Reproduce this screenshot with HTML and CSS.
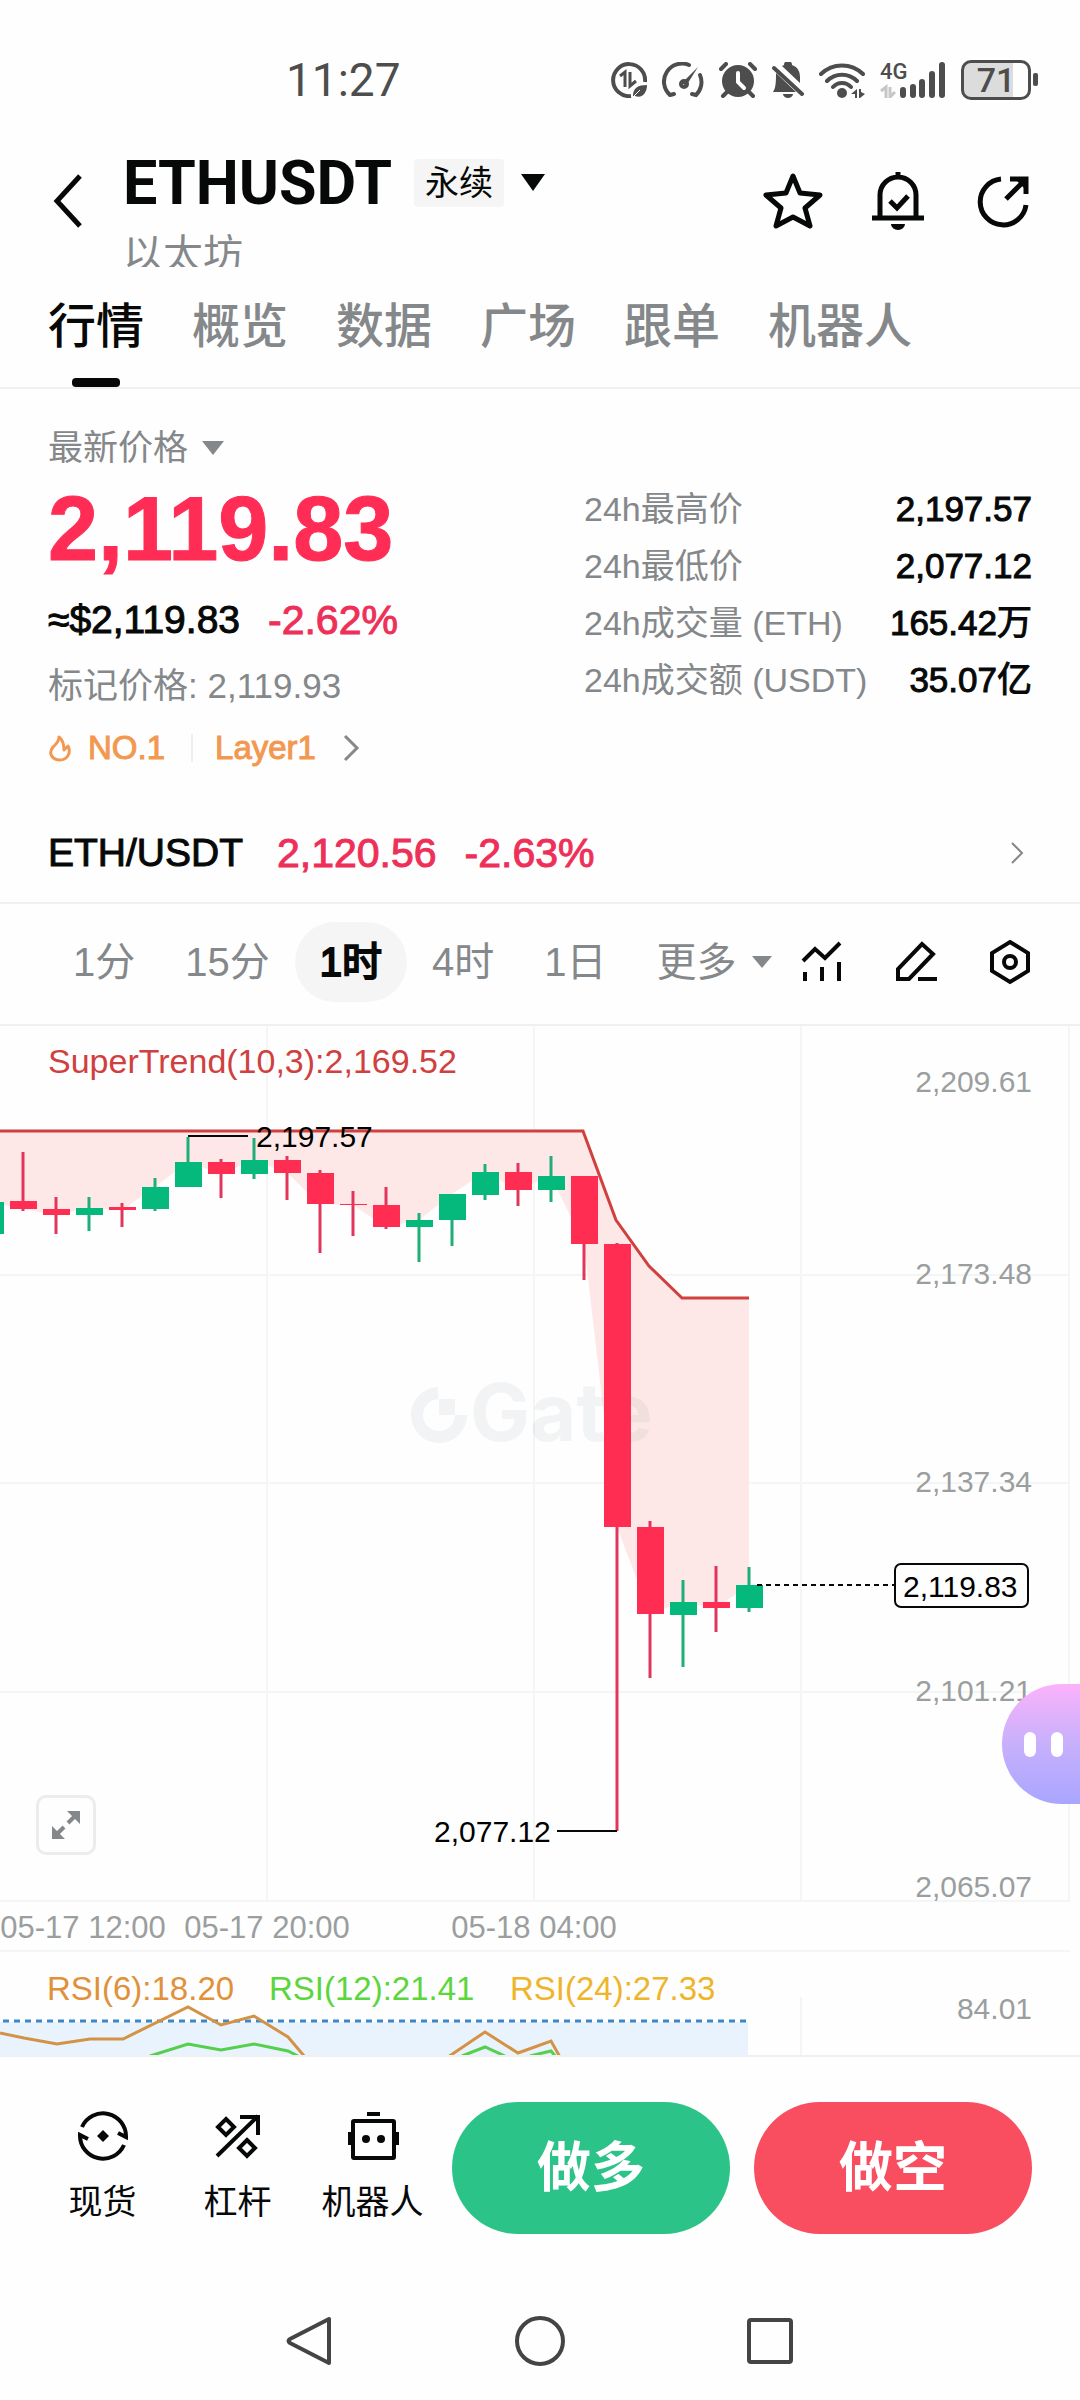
FILE: index.html
```html
<!DOCTYPE html>
<html lang="zh-CN">
<head>
    <meta charset="UTF-8">
    <meta name="viewport" content="width=device-width, initial-scale=1.0">
    <title>ETHUSDT 永续</title>
    <link rel="stylesheet" href="styles.css">
</head>
<body>

    <div class="status-bar">
        <span class="clock">11:27</span>
        <div class="status-icons">
            <!-- data saver -->
            <svg width="36" height="36" viewBox="0 0 36 36" fill="none" stroke="#4d4d4d" stroke-width="4">
                <path d="M20 34A16 16 0 1 1 34 20"/>
                <path d="M9 14l5-4v15M19 10v14l6-5" stroke-width="3"/>
                <path d="M22 34c0-8 5-11 14-11c0 8-5 14-12 11z" fill="#4d4d4d" stroke="none"/>
                <path d="M21 36l8-8" stroke="#fefefe" stroke-width="1"/>
            </svg>
            <!-- speed -->
            <svg width="42" height="36" viewBox="0 0 42 36" fill="none" stroke="#4d4d4d" stroke-width="4" stroke-linecap="round">
                <path d="M8 33l4-1M8 33A18 18 0 0 1 27 3M38 13a18 18 0 0 1-4 20l-4-1"/>
                <path d="M36 5L24 24l-4-3z" fill="#4d4d4d" stroke="none"/>
                <circle cx="22" cy="22" r="3"/>
            </svg>
            <!-- alarm -->
            <svg width="38" height="36" viewBox="0 0 38 36" fill="none" stroke="#4d4d4d" stroke-width="4" stroke-linecap="round">
                <circle cx="19" cy="19" r="16" fill="#4d4d4d" stroke="none"/>
                <path d="M2 7l5-5M36 7l-5-5M8 30l-4 4M30 30l4 4"/>
                <path d="M19 11v9l6 6" stroke="#fefefe"/>
            </svg>
            <!-- muted -->
            <svg width="32" height="36" viewBox="0 0 32 36" fill="#4d4d4d">
                <path d="M12 3a4 4 0 0 1 8 0c6 2 8 7 8 12v6L10 4zM4 11l20 19H1c3-4 3-11 3-19zM11 32h10a5 4 0 0 1-10 0z"/>
                <path d="M2 6l28 26" stroke="#4d4d4d" stroke-width="4" stroke-linecap="round"/>
            </svg>
            <!-- wifi -->
            <svg width="46" height="36" viewBox="0 0 46 36" fill="none" stroke="#4d4d4d" stroke-width="4" stroke-linecap="round">
                <path d="M2 12a30 30 0 0 1 42 0M8 19a21 21 0 0 1 30 0M14 25a12 12 0 0 1 18 0"/>
                <circle cx="23" cy="31" r="5" fill="#4d4d4d" stroke="none"/>
                <path d="M32 32l6-5v9h-2v-4zM40 27h2v3l4 2-5 4h-1z" fill="#4d4d4d" stroke="none"/>
            </svg>
            <!-- signal -->
            <span class="network">
                <span class="network-type">4G</span>
                <svg width="66" height="36" viewBox="0 0 66 36" fill="none" stroke="#4d4d4d" stroke-width="6" stroke-linecap="round">
                    <path d="M23 28v5M33 25v8M42 20v13M52 12v21M62 3v30"/>
                    <path d="M1 29l5-4v11M10 25v10l5-5" stroke="#c6c6c6" stroke-width="3" stroke-linecap="butt"/>
                </svg>
            </span>
            <span class="battery"><span class="battery-level">71</span></span>
        </div>
    </div>

    <header class="header">
        <button class="icon-btn" aria-label="返回">
            <svg width="30" height="54" viewBox="0 0 30 54" fill="none" stroke="#070808" stroke-width="5"><path d="M27 2L4 27l23 25"/></svg>
        </button>
        <div class="pair">
            <button class="pair-title">
                <span class="pair-name">ETHUSDT</span>
                <span class="pair-type">永续</span>
                <svg width="26" height="18" viewBox="0 0 26 18"><path d="M1 0h24L13 17z" fill="#070808"/></svg>
            </button>
            <div class="pair-alias">以太坊</div>
        </div>
        <div class="header-actions">
            <button class="icon-btn" aria-label="收藏">
                <svg width="60" height="60" viewBox="0 0 60 60" fill="none" stroke="#070808" stroke-width="5" stroke-linejoin="round"><path d="M30 5l7 17 20 2-15 13 5 18-17-9-17 9 5-18L3 24l20-2z"/></svg>
            </button>
            <button class="icon-btn" aria-label="提醒">
                <svg width="60" height="60" viewBox="0 0 60 60" fill="none" stroke="#070808" stroke-width="5">
                    <path d="M4 47h52M12 47V24a18 18 0 0 1 36 0v23M30 1v6"/>
                    <path d="M22 30l7 7 11-12"/>
                    <path d="M23 53h14a7 6 0 0 1-14 0z" fill="#070808" stroke="none"/>
                </svg>
            </button>
            <button class="icon-btn" aria-label="分享">
                <svg width="60" height="60" viewBox="0 0 60 60" fill="none" stroke="#070808" stroke-width="5">
                    <path d="M28 8A23 23 0 1 0 53 34"/>
                    <path d="M33 28L51 10M37 8h16v15"/>
                    <path d="M42 8h11v11z" fill="#070808" stroke="none"/>
                </svg>
            </button>
        </div>
    </header>

    <nav class="tabs">
        <a class="tab active" href="#">行情</a>
        <a class="tab" href="#">概览</a>
        <a class="tab" href="#">数据</a>
        <a class="tab" href="#">广场</a>
        <a class="tab" href="#">跟单</a>
        <a class="tab" href="#">机器人</a>
    </nav>

    <section class="ticker">
        <div class="ticker-price">
            <button class="price-type">最新价格
                <svg width="22" height="16" viewBox="0 0 22 16"><path d="M0 1h22L11 15z" fill="#85888a"/></svg>
            </button>
            <div class="last-price">2,119.83</div>
            <div class="fiat-row"><span class="fiat">≈$2,119.83</span><span class="change">-2.62%</span></div>
            <div class="mark-price">标记价格: 2,119.93</div>
            <a class="tags" href="#">
                <svg width="24" height="28" viewBox="0 0 24 28" fill="none" stroke="#f39850" stroke-width="3" stroke-linejoin="round"><path d="M11 3c0 5-3 7-6 10c-6 8 1 13 7 13s12-6 8-14l-4 4c0-6-1-10-5-13z"/></svg>
                <span>NO.1</span>
                <span class="tag-divider"></span>
                <span>Layer1</span>
                <svg class="tag-arrow" width="18" height="28" viewBox="0 0 18 28" fill="none" stroke="#85888a" stroke-width="3"><path d="M3 2l12 12L3 26"/></svg>
            </a>
        </div>
        <dl class="stats">
            <div class="stat"><dt>24h最高价</dt><dd>2,197.57</dd></div>
            <div class="stat"><dt>24h最低价</dt><dd>2,077.12</dd></div>
            <div class="stat"><dt>24h成交量 (ETH)</dt><dd>165.42万</dd></div>
            <div class="stat"><dt>24h成交额 (USDT)</dt><dd>35.07亿</dd></div>
        </dl>
    </section>

    <a class="spot" href="#">
        <span class="spot-name">ETH/USDT</span>
        <span class="spot-price">2,120.56</span>
        <span class="spot-price">-2.63%</span>
        <svg class="spot-arrow" width="16" height="24" viewBox="0 0 16 24" fill="none" stroke="#85888a" stroke-width="2"><path d="M2 2l10 10L2 22"/></svg>
    </a>

    <div class="intervals">
        <button class="interval">1分</button>
        <button class="interval">15分</button>
        <button class="interval active">1时</button>
        <button class="interval">4时</button>
        <button class="interval">1日</button>
        <button class="interval more">更多
            <svg width="20" height="14" viewBox="0 0 20 14"><path d="M0 1h20L10 13z" fill="#85888a"/></svg>
        </button>
        <div class="chart-tools">
            <button class="icon-btn" aria-label="指标">
                <svg width="44" height="46" viewBox="0 0 44 46" fill="none" stroke="#070808" stroke-width="4">
                    <path d="M3 22l12-12 10 9L40 4"/>
                    <path d="M5 33v9M22 28v14M39 23v19"/>
                </svg>
            </button>
            <button class="icon-btn" aria-label="画线">
                <svg width="44" height="46" viewBox="0 0 44 46" fill="none" stroke="#070808" stroke-width="4">
                    <path d="M4 40V30L28 5l11 10-24 25z"/>
                    <path d="M24 40h19"/>
                </svg>
            </button>
            <button class="icon-btn" aria-label="设置">
                <svg width="44" height="46" viewBox="0 0 44 46" fill="none" stroke="#070808" stroke-width="4">
                    <path d="M22 3l18 11v18L22 43 4 32V14z"/>
                    <circle cx="22" cy="23" r="6"/>
                </svg>
            </button>
        </div>
    </div>

    <main class="chart">
        <svg class="chart-svg" viewBox="0 1026 1080 1029">
            <g class="grid">
                <path d="M0 1275h1070M0 1483h1070M0 1692h1070M0 1901h1070M0 1951h1070"/>
                <path d="M267 1026v875M534 1026v875M801 1026v875M1069 1026v875M801 1997v58"/>
            </g>

            <!-- SuperTrend -->
            <path class="trend-fill" d="M0 1131H583L616 1220 649 1266 682 1298H749V1585L716 1608 683 1602 650 1614 617 1527 584 1244 551 1176 518 1190 485 1172 452 1194 419 1220 386 1227 353 1205 320 1204 287 1173 254 1160 221 1174 188 1162 155 1187 122 1210 89 1208 56 1215 23 1209 0 1204z"/>
            <path class="trend-line" d="M0 1131H583L616 1220 649 1266 682 1298H749"/>

            <g class="watermark">
                <path d="M438 1393a22 22 0 1 0 23 22" fill="none" stroke="#3b5a66" stroke-width="12"/>
                <rect x="439" y="1399" width="16" height="16"/>
                <text x="470" y="1441">Gate</text>
            </g>

            <!-- candles: wicks, then bodies -->
            <g class="up">
                <path d="M89 1197v34M155 1178v33M188 1137v50M254 1138v41M419 1213v49M452 1194v52M485 1164v36M551 1156v46M683 1580v87M749 1567v45"/>
                <rect x="-23" y="1202" width="27" height="32"/>
                <rect x="76" y="1208" width="27" height="7"/>
                <rect x="142" y="1187" width="27" height="22"/>
                <rect x="175" y="1162" width="27" height="25"/>
                <rect x="241" y="1160" width="27" height="14"/>
                <rect x="406" y="1220" width="27" height="7"/>
                <rect x="439" y="1194" width="27" height="26"/>
                <rect x="472" y="1172" width="27" height="23"/>
                <rect x="538" y="1176" width="27" height="14"/>
                <rect x="670" y="1602" width="27" height="13"/>
                <rect x="736" y="1585" width="27" height="23"/>
            </g>
            <g class="down">
                <path d="M23 1152v59M56 1197v37M122 1203v24M221 1159v39M287 1156v44M320 1170v83M353 1191v45M386 1187v42M518 1163v43M584 1176v104M617 1243v588M650 1521v157M716 1566v66"/>
                <rect x="10" y="1201" width="27" height="8"/>
                <rect x="43" y="1209" width="27" height="6"/>
                <rect x="109" y="1207" width="27" height="3"/>
                <rect x="208" y="1162" width="27" height="12"/>
                <rect x="274" y="1160" width="27" height="13"/>
                <rect x="307" y="1173" width="27" height="31"/>
                <rect x="340" y="1204" width="27" height="1"/>
                <rect x="373" y="1205" width="27" height="22"/>
                <rect x="505" y="1172" width="27" height="18"/>
                <rect x="571" y="1176" width="27" height="68"/>
                <rect x="604" y="1244" width="27" height="283"/>
                <rect x="637" y="1527" width="27" height="87"/>
                <rect x="703" y="1602" width="27" height="6"/>
            </g>

            <g class="marks">
                <path d="M188 1136h60M557 1831h60"/>
                <path d="M757 1585h137" stroke-dasharray="5 4"/>
                <rect x="895" y="1564" width="133" height="43" rx="6"/>
                <text x="256" y="1147">2,197.57</text>
                <text x="434" y="1842">2,077.12</text>
                <text x="903" y="1597">2,119.83</text>
            </g>

            <text class="trend-label" x="48" y="1073">SuperTrend(10,3):2,169.52</text>

            <g class="axis-y">
                <text x="1032" y="1092">2,209.61</text>
                <text x="1032" y="1284">2,173.48</text>
                <text x="1032" y="1492">2,137.34</text>
                <text x="1032" y="1701">2,101.21</text>
                <text x="1032" y="1897">2,065.07</text>
                <text x="1032" y="2019">84.01</text>
            </g>
            <g class="axis-x">
                <text x="83" y="1938">05-17 12:00</text>
                <text x="267" y="1938">05-17 20:00</text>
                <text x="534" y="1938">05-18 04:00</text>
            </g>

            <!-- RSI -->
            <rect class="rsi-band" x="0" y="2022" width="748" height="33"/>
            <path class="rsi-limit" d="M3 2021h745"/>
            <path class="rsi12" d="M150 2056L188 2044 221 2050 254 2044 288 2051 298 2056M462 2056L485 2047 505 2056M530 2056L551 2051 556 2057"/>
            <path class="rsi6" d="M0 2033L24 2038 57 2044 90 2039H123L188 2007 221 2025 254 2016 288 2037 305 2057M448 2057L485 2032 518 2053 551 2041 560 2057"/>
            <g class="rsi-labels">
                <text x="47" y="2000" fill="#e0913a">RSI(6):18.20</text>
                <text x="269" y="2000" fill="#5bd63c">RSI(12):21.41</text>
                <text x="510" y="2000" fill="#efb52a">RSI(24):27.33</text>
            </g>
        </svg>
        <button class="expand" aria-label="全屏">
            <svg width="30" height="30" viewBox="0 0 30 30" fill="none" stroke="#85888a" stroke-width="4">
                <path d="M17 13l8-8M13 17l-8 8"/>
                <path d="M16 1h13v13zM1 16v13h13z" fill="#85888a" stroke="none"/>
            </svg>
        </button>
        <button class="assistant" aria-label="助手"><span class="eye"></span><span class="eye"></span></button>
    </main>

    <footer class="actions">
        <a class="action" href="#">
            <svg width="52" height="52" viewBox="0 0 52 52" fill="none" stroke="#070808" stroke-width="4">
                <path d="M5 17A23 23 0 0 1 49 27l-8-4M47 35A23 23 0 0 1 3 25l8 4"/>
                <path d="M26 20l6 6-6 6-6-6z" fill="#070808" stroke="none"/>
            </svg>
            <span>现货</span>
        </a>
        <a class="action" href="#">
            <svg width="52" height="52" viewBox="0 0 52 52" fill="none" stroke="#070808" stroke-width="4">
                <path d="M5 46L46 6M28 7h18v18M14 9l8 8-8 8-8-8zM35 30l8 8-8 8-8-8z"/>
            </svg>
            <span>杠杆</span>
        </a>
        <a class="action" href="#">
            <svg width="52" height="52" viewBox="0 0 52 52" fill="none" stroke="#070808" stroke-width="4">
                <rect x="6" y="11" width="41" height="37" rx="1"/>
                <path d="M20 4h13M3 22v13M50 22v13"/>
                <circle cx="19" cy="29" r="4" fill="#070808" stroke="none"/>
                <circle cx="34" cy="29" r="4" fill="#070808" stroke="none"/>
            </svg>
            <span>机器人</span>
        </a>
        <div class="trade">
            <button class="trade-btn long">做多</button>
            <button class="trade-btn short">做空</button>
        </div>
    </footer>

    <nav class="system-nav">
        <button class="icon-btn" aria-label="后退">
            <svg width="52" height="52" viewBox="0 0 52 52" fill="none" stroke="#444" stroke-width="4" stroke-linejoin="round"><path d="M45 4v44L6 28q-3-2 0-4z"/></svg>
        </button>
        <button class="icon-btn" aria-label="主屏幕">
            <svg width="52" height="52" viewBox="0 0 52 52" fill="none" stroke="#444" stroke-width="4"><circle cx="26" cy="26" r="23"/></svg>
        </button>
        <button class="icon-btn" aria-label="最近任务">
            <svg width="52" height="52" viewBox="0 0 52 52" fill="none" stroke="#444" stroke-width="4"><rect x="5" y="5" width="42" height="42" rx="2"/></svg>
        </button>
    </nav>

</body>
</html>
```
FILE: styles.css
```css
* {
    box-sizing: border-box;
}
body {
    margin: 0;
    font-family: "Liberation Sans", "Noto Sans CJK SC", sans-serif;
    font-size: 34px;
    line-height: 48px;
    color: #070808;
    background: #fefefe;
}
button {
    font: inherit;
    color: inherit;
    background: none;
    border: none;
    padding: 0;
    cursor: pointer;
}
a {
    color: inherit;
    text-decoration: none;
}
svg {
    display: block;
    flex: none;
}
.icon-btn {
    display: flex;
}

/* status bar */
.status-bar {
    display: flex;
    align-items: center;
    justify-content: space-between;
    height: 120px;
    padding: 40px 42px 0 286px;
    color: #4d4d4d;
}
.clock {
    font-family: Roboto, sans-serif;
    font-size: 46px;
}
.status-icons {
    display: flex;
    align-items: center;
    gap: 15px;
}
.network {
    position: relative;
}
.network-type {
    position: absolute;
    top: -2px;
    left: 0;
    font-family: Roboto, sans-serif;
    font-size: 22px;
    font-weight: 500;
    line-height: 24px;
}
.battery {
    position: relative;
    width: 70px;
    height: 40px;
    padding: 2px;
    border: 3px solid #4d4d4d;
    border-radius: 10px;
    background: linear-gradient(to right, #dcdcdc 76%, #fefefe 76%);
    margin-right: 7px;
}
.battery::after {
    content: "";
    position: absolute;
    right: -10px;
    top: 10px;
    width: 5px;
    height: 13px;
    border-radius: 2px;
    background: #4d4d4d;
}
.battery-level {
    display: block;
    font-family: Roboto, sans-serif;
    font-size: 34px;
    font-weight: 500;
    line-height: 30px;
    text-align: center;
}

/* header */
.header {
    display: flex;
    align-items: center;
    height: 162px;
    padding: 0 47px 0 53px;
}
.pair {
    align-self: stretch;
    padding: 32px 0 0 40px;
}
.pair-title {
    display: flex;
    align-items: center;
    height: 62px;
}
.pair-name {
    font-family: Roboto, sans-serif;
    font-size: 61px;
    font-weight: 700;
    margin-right: 22px;
}
.pair-type {
    padding: 0 11px;
    border-radius: 4px;
    background: #f5f5f5;
    margin-right: 16px;
}
.pair-alias {
    height: 37px;
    margin-top: 16px;
    overflow: hidden;
    font-size: 40px;
    color: #85888a;
}
.header-actions {
    display: flex;
    gap: 45px;
    margin-left: auto;
}

/* tabs */
.tabs {
    display: flex;
    gap: 48px;
    padding: 0 48px;
    border-bottom: 2px solid #f0f0f0;
}
.tab {
    position: relative;
    height: 105px;
    padding-top: 15px;
    font-size: 48px;
    font-weight: 500;
    line-height: 60px;
    color: #85888a;
}
.tab.active {
    color: #070808;
}
.tab.active::after {
    content: "";
    position: absolute;
    left: 24px;
    right: 24px;
    bottom: 0;
    height: 9px;
    border-radius: 4px;
    background: #070808;
}

/* ticker */
.ticker {
    display: flex;
    justify-content: space-between;
    padding: 35px 48px 32px;
}
.price-type {
    display: flex;
    align-items: center;
    gap: 14px;
    font-size: 35px;
    color: #85888a;
}
.last-price {
    margin-top: 9px;
    font-size: 90px;
    font-weight: 700;
    line-height: 96px;
    color: #ff2d55;
    -webkit-text-stroke: 1px;
}
.fiat-row {
    display: flex;
    gap: 28px;
    margin-top: 19px;
    font-size: 39px;
    -webkit-text-stroke: 1px;
}
.change {
    font-size: 41px;
    color: #ee3059;
}
.mark-price {
    margin-top: 18px;
    font-size: 35px;
    color: #85888a;
}
.tags {
    display: flex;
    align-items: center;
    margin-top: 14px;
    font-size: 33px;
    color: #f39850;
    -webkit-text-stroke: 1px;
    gap: 16px;
}
.tag-divider {
    width: 2px;
    height: 28px;
    margin: 0 6px 0 10px;
    background: #eee;
}
.tag-arrow {
    margin-left: 10px;
}
.stats {
    display: flex;
    flex-direction: column;
    gap: 9px;
    width: 448px;
    margin: 61px 0 0;
}
.stat {
    display: flex;
    justify-content: space-between;
    white-space: nowrap;
}
.stat dt {
    color: #85888a;
}
.stat dd {
    margin: 0;
    font-size: 35px;
    -webkit-text-stroke: 1px;
}

/* spot row */
.spot {
    display: flex;
    align-items: center;
    gap: 28px;
    height: 100px;
    padding: 0 54px 0 48px;
    border-bottom: 2px solid #f0f0f0;
    font-size: 41px;
    -webkit-text-stroke: 1px;
}
.spot-name {
    font-size: 39px;
    margin-right: 6px;
}
.spot-price {
    color: #ee3059;
}
.spot-arrow {
    margin-left: auto;
}

/* intervals */
.intervals {
    display: flex;
    align-items: center;
    height: 122px;
    padding: 0 48px 4px 48px;
    border-bottom: 2px solid #f0f0f0;
    font-size: 40px;
    color: #85888a;
}
.interval {
    height: 80px;
    padding: 0 25px;
    border-radius: 40px;
    white-space: nowrap;
}
.interval.active {
    color: #070808;
    background: #f5f5f5;
    -webkit-text-stroke: 2px;
}
.interval.more {
    display: flex;
    align-items: center;
    gap: 15px;
    padding-right: 0;
}
.chart-tools {
    display: flex;
    gap: 50px;
    margin-left: auto;
}

/* chart */
.chart {
    position: relative;
    border-bottom: 2px solid #f0f0f0;
}
.chart-svg {
    width: 100%;
    font-size: 30px;
}
.grid {
    stroke: #f4f5f5;
    stroke-width: 2;
}
.trend-fill {
    fill: #fee8e7;
}
.trend-line {
    fill: none;
    stroke: #d0403f;
    stroke-width: 3;
}
.trend-label {
    font-size: 34px;
    fill: #d0403f;
}
.watermark {
    opacity: 0.06;
    fill: #3b5a66;
    font-family: Inter, sans-serif;
    font-size: 80px;
    font-weight: 700;
}
.up path {
    stroke: #1fae78;
    stroke-width: 3;
}
.up rect {
    fill: #05b97c;
}
.down path {
    stroke: #e0365c;
    stroke-width: 3;
}
.down rect {
    fill: #ff2d52;
}
.marks path {
    stroke: #070808;
    stroke-width: 2;
}
.marks rect {
    fill: #fefefe;
    stroke: #070808;
    stroke-width: 2;
}
.axis-y {
    fill: #9b9e9f;
    text-anchor: end;
}
.axis-x {
    font-size: 31px;
    fill: #9b9e9f;
    text-anchor: middle;
}
.rsi-band {
    fill: #e8f3fd;
}
.rsi-limit {
    stroke: #3b87c8;
    stroke-width: 3;
    stroke-dasharray: 6 5;
}
.rsi6,
.rsi12 {
    fill: none;
    stroke: #d49344;
    stroke-width: 3;
}
.rsi12 {
    stroke: #56cf4c;
}
.rsi-labels {
    font-size: 33px;
}
.expand {
    position: absolute;
    left: 36px;
    bottom: 200px;
    display: flex;
    align-items: center;
    justify-content: center;
    width: 60px;
    height: 60px;
    border: 3px solid #ececec;
    border-radius: 10px;
    background: #fefefe;
}
.assistant {
    position: absolute;
    right: 0;
    bottom: 251px;
    display: flex;
    align-items: center;
    gap: 15px;
    width: 78px;
    height: 120px;
    padding-left: 22px;
    border-radius: 60px 0 0 60px;
    background: linear-gradient(#fbb2fb, #c7b0fc 50%, #a9a6ff);
}
.eye {
    width: 12px;
    height: 25px;
    border-radius: 6px;
    background: #fff;
}

/* bottom actions */
.actions {
    display: flex;
    align-items: center;
    padding: 45px 48px 55px 35px;
}
.action {
    display: flex;
    flex-direction: column;
    align-items: center;
    gap: 16px;
    width: 135px;
}
.trade {
    display: flex;
    flex: 1;
    gap: 24px;
    margin-left: 12px;
}
.trade-btn {
    flex: 1;
    height: 132px;
    border-radius: 66px;
    font-size: 54px;
    font-weight: 700;
    color: #fff;
}
.long {
    background: #2cc388;
}
.short {
    background: #f94e60;
}

/* system navigation */
.system-nav {
    display: flex;
    justify-content: center;
    gap: 178px;
    padding: 26px 0 30px;
}
```
